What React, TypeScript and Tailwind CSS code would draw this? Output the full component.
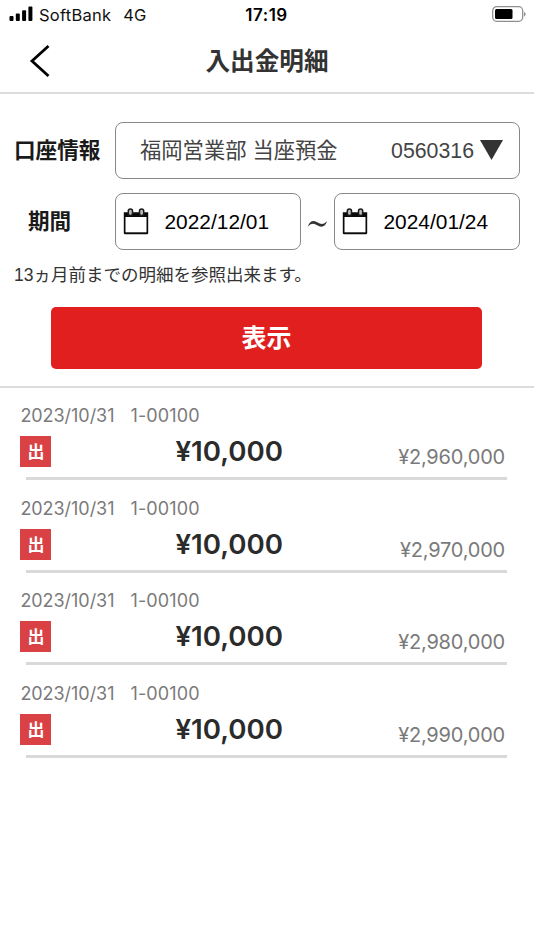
interface Entry {
  id: number;
  date: string;
  code: string;
  amount: string;
  balance: string;
}

const entries: Entry[] = [
  { id: 1, date: "2023/10/31", code: "1-00100", amount: "¥10,000", balance: "¥2,960,000" },
  { id: 2, date: "2023/10/31", code: "1-00100", amount: "¥10,000", balance: "¥2,970,000" },
  { id: 3, date: "2023/10/31", code: "1-00100", amount: "¥10,000", balance: "¥2,980,000" },
  { id: 4, date: "2023/10/31", code: "1-00100", amount: "¥10,000", balance: "¥2,990,000" },
];

function StatusBar() {
  return (
    <div className="grid h-[28px] grid-cols-[1fr_auto_1fr] items-center pt-[2px] pr-[8px] pl-[9px] text-[16.5px] leading-none text-[#111]">
      <div className="flex items-center">
        <svg className="-mt-[2px]" width="24" height="16" viewBox="0 0 24 16" fill="#000">
          <rect x="0.5" y="10" width="4" height="5" rx="1" />
          <rect x="6.8" y="7.6" width="4" height="7.4" rx="1" />
          <rect x="13.1" y="4.2" width="4" height="10.8" rx="1" />
          <rect x="19.4" y="0.6" width="4" height="14.4" rx="1" />
        </svg>
        <span className="ml-[6px] tracking-[0.25px]">SoftBank</span>
        <span className="ml-[12px]">4G</span>
      </div>
      <span className="-ml-[2px] text-[17px] font-semibold tracking-[0.5px] text-black">17:19</span>
      <svg className="-mt-[2px] ml-auto" width="34" height="18" viewBox="0 0 34 18">
        <rect x="0.7" y="1.7" width="30" height="14.6" rx="4" fill="none" stroke="#8f8f8f" strokeWidth="1.3" />
        <rect x="3" y="4" width="17.5" height="10" rx="1.5" fill="#000" />
        <path d="M32 7v4.400c1-.3 1.600-1.200 1.600-2.200s-.6-1.900-1.600-2.200Z" fill="#8f8f8f" />
      </svg>
    </div>
  );
}

function CalendarIcon() {
  return (
    <svg width="26" height="28" viewBox="0 0 26 28">
      <path d="M.8 4.200h24.400v20.800a1.200 1.200 0 0 1-1.200 1.200H2a1.200 1.200 0 0 1-1.200-1.200Z" fill="#0a0a0a" />
      <rect x="2.500" y="9" width="21" height="15.300" fill="#fff" />
      <rect x="5.300" y="1" width="4.200" height="6.600" rx="2.100" fill="#bbb" stroke="#1a1a1a" strokeWidth="1.500" />
      <rect x="16.500" y="1" width="4.200" height="6.600" rx="2.100" fill="#bbb" stroke="#1a1a1a" strokeWidth="1.500" />
    </svg>
  );
}

function DateField({ value }: { value: string }) {
  return (
    <button className="flex h-[57px] w-[186px] items-center rounded-[8px] border border-[#888] pl-[7px] font-['Liberation_Sans','Noto_Sans_CJK_JP',sans-serif] text-[20.9px] text-black">
      <CalendarIcon />
      <span className="ml-[15.500px]">{value}</span>
    </button>
  );
}

function EntryRow({ entry }: { entry: Entry }) {
  return (
    <li className="h-[92.5px] pt-[16px] pr-[27px] pl-[20.4px]">
      <div className="flex gap-[16px] text-[18px] leading-[24px] text-[#7a7a7a]">
        <span className="tracking-[-0.05px]">{entry.date}</span>
        <span className="tracking-[0.15px]">{entry.code}</span>
      </div>
      <div className="flex h-[49px] items-start">
        <span className="mt-[8px] flex size-[31px] items-center justify-center bg-[#d94145] pt-[2px] text-[17px] leading-none font-bold text-white">
          出
        </span>
        <span className="ml-[124px] pt-[6px] text-[27.7px] leading-[34px] font-semibold text-[#2b2b2b]">
          {entry.amount}
        </span>
        <span className="mt-[16px] mr-[2px] ml-auto text-[20px] leading-[26px] tracking-[-0.2px] text-[#7a7a7a]">
          {entry.balance}
        </span>
      </div>
      <div className="ml-[5.6px] h-[3px] bg-[#d9d9d9]" />
    </li>
  );
}

export default function App() {
  return (
    <div className="h-[950px] w-[534px] overflow-hidden bg-white font-['Inter','Noto_Sans_CJK_JP',sans-serif]">
      <StatusBar />
      <header className="grid h-[66px] grid-cols-[1fr_auto_1fr] items-center border-b-2 border-[#dcdcdc]">
        <button className="mt-[2px] ml-[29px]">
          <svg width="22" height="34" viewBox="0 0 22 34" fill="none" stroke="#000" strokeWidth="2.8">
            <path d="M19.5 2 3 17l16.5 15" />
          </svg>
        </button>
        <h1 className="pt-[2px] text-[24.6px] leading-none font-bold text-[#333]">入出金明細</h1>
      </header>

      <section className="h-[294px] border-b-2 border-[#dcdcdc] px-[14px] pt-[28px]">
        <div className="flex items-center">
          <span className="w-[101px] text-[21.6px] font-bold text-[#1a1a1a]">口座情報</span>
          <button className="flex h-[57px] w-[405px] items-center rounded-[8px] border border-[#888] pt-[2px] pr-[16px] pl-[24px] font-['Liberation_Sans','Noto_Sans_CJK_JP',sans-serif] text-[21.3px] text-[#444]">
            <span>福岡営業部 当座預金</span>
            <span className="ml-auto">0560316</span>
            <svg className="-mt-[4px] ml-[6px]" width="23" height="20" viewBox="0 0 23 20" fill="#333">
              <path d="M0 0h23L11.5 20Z" />
            </svg>
          </button>
        </div>
        <div className="mt-[14px] flex items-center">
          <span className="w-[101px] pl-[14px] text-[21.6px] font-bold text-[#1a1a1a]">期間</span>
          <DateField value="2022/12/01" />
          <svg className="mt-[5px] mr-[6px] ml-[6px]" width="21" height="8" viewBox="0 0 21 8" fill="#333">
            <path d="M.8 6.800C1.800 2.800 4 1 6.600 1c2.900 0 5.400 3 8.200 3 1.900 0 3.600-1 5.200-2.900-.9 3.700-3 5.600-5.600 5.600-3 0-5.500-3-8.300-3-2 0-3.700 1-5.300 3.100Z" />
          </svg>
          <DateField value="2024/01/24" />
        </div>
        <p className="mt-[12px] font-['Liberation_Sans','Noto_Sans_CJK_JP',sans-serif] text-[17.5px] leading-[26px] text-[#333]">
          13ヵ月前までの明細を参照出来ます。
        </p>
        <button className="mt-[19px] ml-[37px] flex h-[62px] w-[431px] items-center justify-center rounded-[5px] bg-[#e11f1f] text-[25px] leading-none font-bold text-white">
          表示
        </button>
      </section>

      <ul>
        {entries.map((entry) => (
          <EntryRow key={entry.id} entry={entry} />
        ))}
      </ul>
    </div>
  );
}
